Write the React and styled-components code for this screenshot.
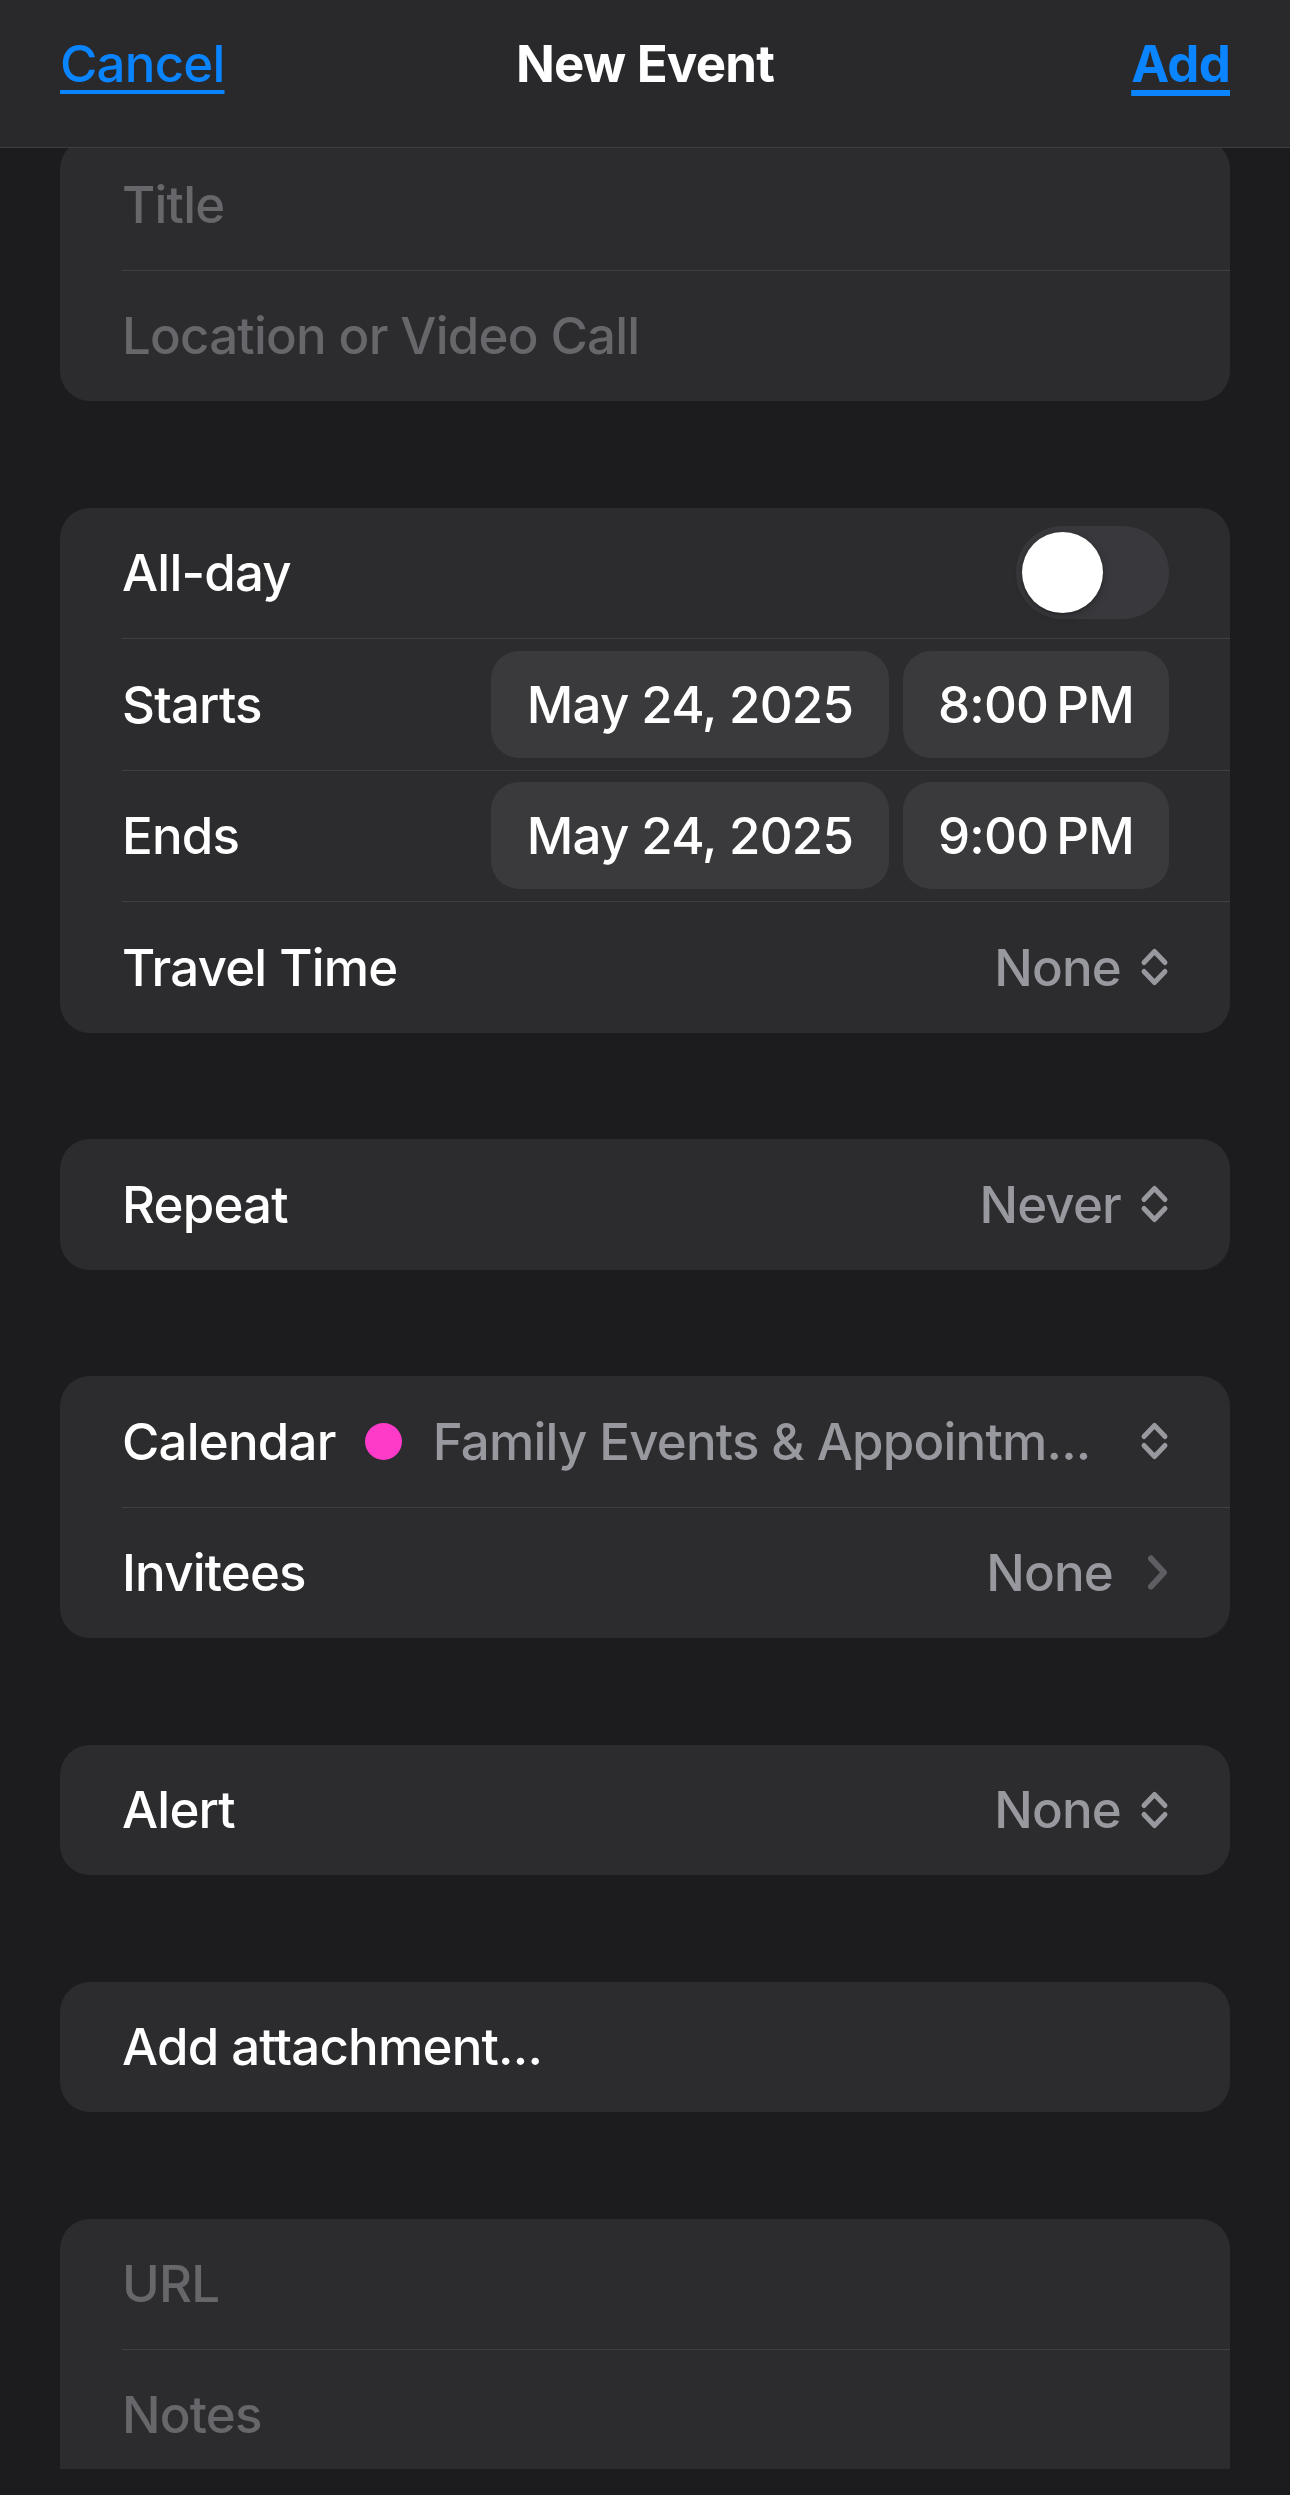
import React from "react";
import styled, { createGlobalStyle } from "styled-components";

const GlobalStyle = createGlobalStyle`
	html, body {
		margin: 0;
		padding: 0;
		background: #1c1c1e;
	}
	body {
		font-family: "Inter", "Noto Sans", "Liberation Sans", sans-serif;
		-webkit-font-smoothing: antialiased;
	}
`;

const ChevronUpDown = () => (
	<svg width="29" height="40" viewBox="0 0 29 40" fill="none">
		<polyline
			points="4,15.5 14.5,4.5 25,15.5"
			stroke="#98989f"
			strokeWidth="5"
			strokeLinecap="round"
			strokeLinejoin="round"
		/>
		<polyline
			points="4,24.5 14.5,35.5 25,24.5"
			stroke="#98989f"
			strokeWidth="5"
			strokeLinecap="round"
			strokeLinejoin="round"
		/>
	</svg>
);

const ChevronRight = () => (
	<svg width="23" height="37" viewBox="0 0 23 37" fill="none">
		<polyline
			points="5,4.5 18,18.5 5,32.5"
			stroke="#5d5d62"
			strokeWidth="6"
			strokeLinecap="round"
			strokeLinejoin="round"
		/>
	</svg>
);

export default function App() {
	return (
		<Page>
			<GlobalStyle />
			<NavBar>
				<NavLink>Cancel</NavLink>
				<NavTitle>New Event</NavTitle>
				<NavLink bold>Add</NavLink>
			</NavBar>

			<Content>
				<Card>
					<Row>
						<Placeholder>Title</Placeholder>
					</Row>
					<Divider />
					<Row>
						<Placeholder>Location or Video Call</Placeholder>
					</Row>
				</Card>

				<Card>
					<Row>
						<Label>All-day</Label>
						<Toggle>
							<Knob />
						</Toggle>
					</Row>
					<Divider />
					<Row>
						<Label>Starts</Label>
						<Pills>
							<Pill wide>May 24, 2025</Pill>
							<Pill>8:00&#8201;PM</Pill>
						</Pills>
					</Row>
					<Divider />
					<Row>
						<Label>Ends</Label>
						<Pills>
							<Pill wide>May 24, 2025</Pill>
							<Pill>9:00&#8201;PM</Pill>
						</Pills>
					</Row>
					<Divider />
					<Row>
						<Label>Travel Time</Label>
						<Value>
							None
							<ChevronUpDown />
						</Value>
					</Row>
				</Card>

				<Card>
					<Row>
						<Label>Repeat</Label>
						<Value>
							Never
							<ChevronUpDown />
						</Value>
					</Row>
				</Card>

				<Card>
					<Row>
						<Label>Calendar</Label>
						<CalendarDot />
						<CalendarName>Family Events &amp; Appointm...</CalendarName>
						<ChevronUpDown />
					</Row>
					<Divider />
					<Row>
						<Label>Invitees</Label>
						<Value gap={33}>
							None
							<ChevronRight />
						</Value>
					</Row>
				</Card>

				<Card>
					<Row>
						<Label>Alert</Label>
						<Value>
							None
							<ChevronUpDown />
						</Value>
					</Row>
				</Card>

				<Card>
					<Row>
						<Label>Add attachment...</Label>
					</Row>
				</Card>

				<Card cut>
					<Row>
						<Placeholder>URL</Placeholder>
					</Row>
					<Divider />
					<Row last>
						<Placeholder>Notes</Placeholder>
					</Row>
				</Card>
			</Content>
		</Page>
	);
}

const Page = styled.div`
	width: 1290px;
	min-height: 2495px;
	background: #1c1c1e;
	padding-bottom: 28px;
	box-sizing: border-box;
`;

const NavBar = styled.header`
	position: sticky;
	top: 0;
	z-index: 10;
	height: 148px;
	box-sizing: border-box;
	padding: 33px 60px 0;
	background: #29292b;
	border-bottom: 1px solid #3d3d3f;
	display: grid;
	grid-template-columns: 1fr auto 1fr;
	align-items: start;

	& > :last-child {
		justify-self: end;
	}
`;

const NavLink = styled.span`
	font-size: 51px;
	line-height: 62px;
	font-weight: ${(p) => (p.bold ? 700 : 500)};
	color: #0a84ff;
	text-decoration: underline;
	text-decoration-thickness: ${(p) => (p.bold ? "6px" : "4px")};
	text-underline-offset: 8px;
	letter-spacing: -0.8px;
`;

const NavTitle = styled.span`
	font-size: 51px;
	line-height: 62px;
	font-weight: 700;
	color: #ffffff;
	letter-spacing: -0.8px;
`;

const Content = styled.main`
	margin-top: -9px;
	padding: 0 60px;
	display: flex;
	flex-direction: column;
	gap: 106.5px;
`;

const Card = styled.section`
	background: #2c2c2e;
	border-radius: ${(p) => (p.cut ? "30px 30px 0 0" : "30px")};
	overflow: hidden;
`;

const Row = styled.div`
	height: ${(p) => (p.last ? "119px" : "130.5px")};
	display: flex;
	align-items: center;
	padding: 0 61px 0 62px;
	font-size: 51px;
	font-weight: 500;
	letter-spacing: -0.8px;
	${(p) => p.last && "align-items: flex-start; line-height: 130px;"}
`;

const Divider = styled.div`
	height: 1px;
	margin-left: 62px;
	background: #3e3e41;
`;

const Label = styled.span`
	color: #ffffff;
	white-space: nowrap;
`;

const Placeholder = styled.span`
	color: #67676b;
`;

const Value = styled.span`
	margin-left: auto;
	display: flex;
	align-items: center;
	gap: ${(p) => p.gap || 19}px;
	color: #98989f;
`;

const Toggle = styled.div`
	margin-left: auto;
	width: 153px;
	height: 93px;
	border-radius: 47px;
	background: #39393d;
	display: flex;
	align-items: center;
	padding-left: 6px;
	box-sizing: border-box;
`;

const Knob = styled.div`
	width: 81px;
	height: 81px;
	border-radius: 50%;
	background: #ffffff;
	box-shadow: 0 3px 8px rgba(0, 0, 0, 0.25), 0 1px 2px rgba(0, 0, 0, 0.2);
`;

const Pills = styled.div`
	margin-left: auto;
	display: flex;
	gap: 14px;
`;

const Pill = styled.div`
	width: ${(p) => (p.wide ? "398px" : "266px")};
	height: 107px;
	border-radius: 28px;
	background: #3a3a3c;
	color: #ffffff;
	display: flex;
	align-items: center;
	justify-content: center;
	font-size: 51px;
	font-weight: 500;
	letter-spacing: -0.8px;
`;

const CalendarDot = styled.span`
	flex: none;
	width: 37px;
	height: 37px;
	border-radius: 50%;
	background: #fe3ac8;
	margin: 0 31px 0 29px;
`;

const CalendarName = styled.span`
	flex: 1;
	min-width: 0;
	margin-right: 45px;
	color: #98989f;
	white-space: nowrap;
	overflow: hidden;
	text-overflow: ellipsis;
`;
